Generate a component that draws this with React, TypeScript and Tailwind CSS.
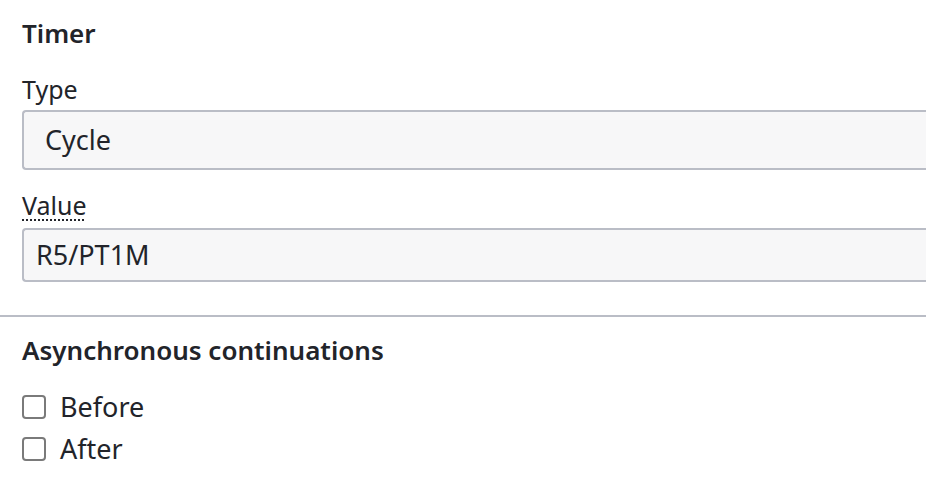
export default function App() {
  return (
    <div
      className="w-[926px] h-[496px] overflow-hidden bg-white text-[#22242a]"
      style={{ fontFamily: '"Noto Sans", "Open Sans", sans-serif' }}
    >
      {/* Timer group */}
      <div className="pl-[22px]">
        <div className="h-[66px] flex items-center text-[26px] font-semibold">Timer</div>

        <div className="mt-[9px] h-[28px] leading-[28px] text-[25px]">Type</div>
        <div className="mt-[7px] h-[60px] flex items-center border-2 border-r-0 border-[#babdc6] rounded-l-[4px] bg-[#f7f7f8] pl-[21px] text-[27px]">
          Cycle
        </div>

        <div className="mt-[21px] h-[28px] leading-[28px] text-[25px]">
          <span className="underline decoration-dotted decoration-2 underline-offset-[4px]">Value</span>
        </div>
        <div className="mt-[9px] h-[54px] flex items-center border-2 border-r-0 border-[#babdc6] rounded-l-[4px] bg-[#f7f7f8] pl-[12px] text-[27px]">
          R5/PT1M
        </div>
      </div>

      <div className="mt-[33px] h-[2px] bg-[#babdc6]" />

      {/* Asynchronous continuations group */}
      <div className="pl-[22px]">
        <div className="mt-[10px] h-[46px] flex items-center text-[26px] font-semibold">
          Asynchronous continuations
        </div>
        <div className="mt-[13px] flex flex-col">
          {['Before', 'After'].map((label) => (
            <label key={label} className="h-[42px] flex items-center gap-[14px] text-[27px]">
              <span className="w-[24px] h-[24px] border-2 border-[#7a7a7a] rounded-[4px] bg-white" />
              {label}
            </label>
          ))}
        </div>
      </div>
    </div>
  );
}
